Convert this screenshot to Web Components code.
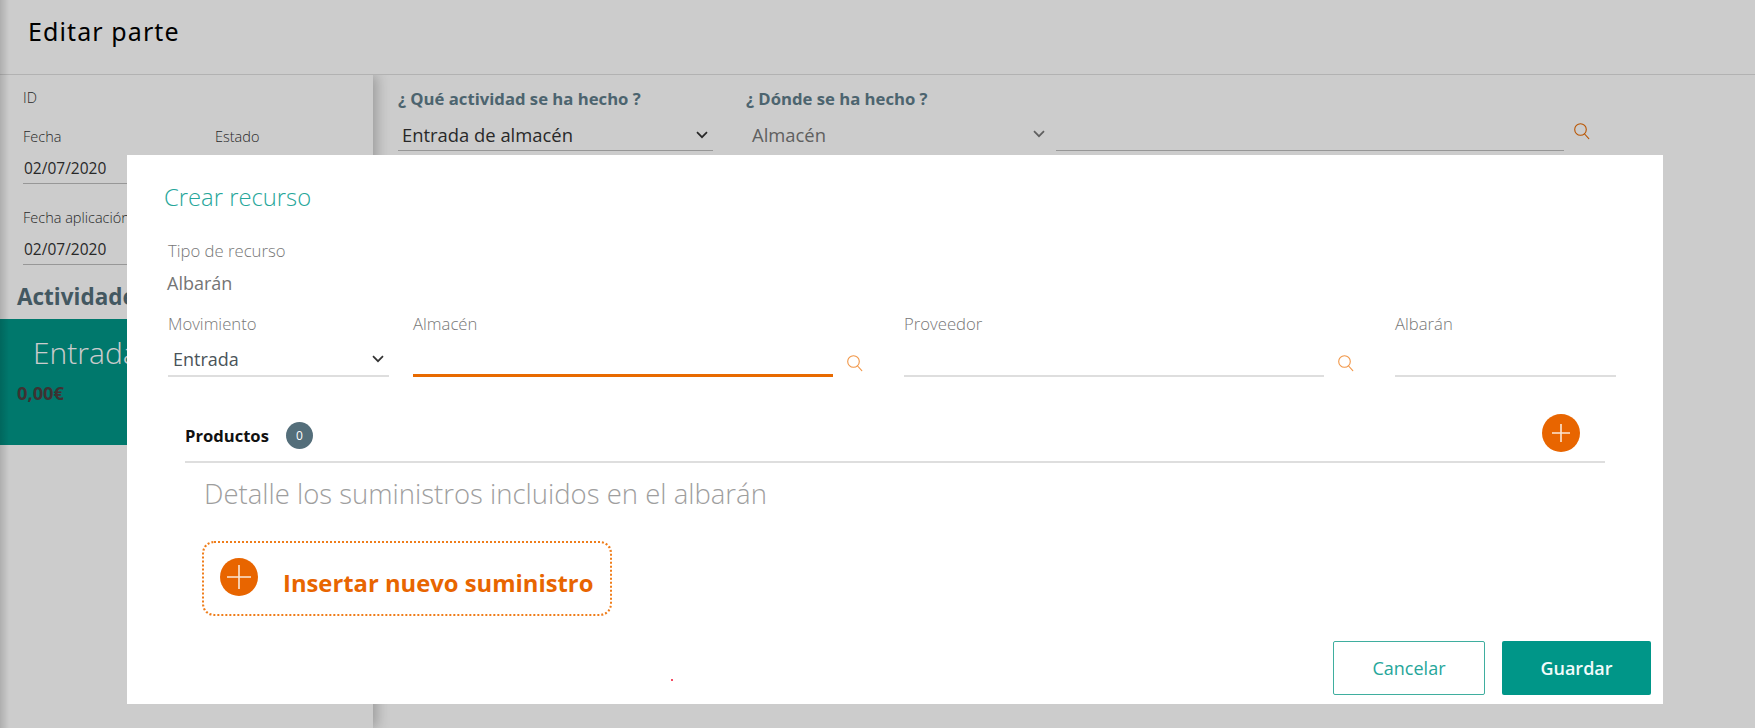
<!DOCTYPE html>
<html lang="es">
<head>
<meta charset="utf-8">
<title>Editar parte</title>
<style>
  html, body { margin: 0; height: 100%; }
  body { font-family: "Open Sans", sans-serif; background: #fff; overflow: hidden; }
</style>
</head>
<body>
<parte-page>
  <parte-sidebar></parte-sidebar>
  <parte-where></parte-where>
</parte-page>
<parte-overlay>
  <recurso-modal></recurso-modal>
</parte-overlay>

<script>
const searchIcon = (color) => /*html*/`
  <svg width="18" height="18" viewBox="0 0 18 18" fill="none" stroke="${color}" stroke-width="1.1" stroke-linecap="round">
    <circle cx="7.5" cy="7.5" r="5.8"/>
    <path d="M11.6 12 L15.8 16.6"/>
  </svg>`

const chevron = (color) => /*html*/`
  <svg width="12" height="8" viewBox="0 0 12 8" fill="none" stroke="${color}" stroke-width="1.7">
    <path d="M1 1.2 L6 6.2 L11 1.2"/>
  </svg>`

class ParteHeader extends HTMLElement {
  constructor () {
    super()
    this.attachShadow({ mode: 'open' })
  }
  connectedCallback () {
    this.shadowRoot.innerHTML = /*html*/`
      <style>
        :host { display: flex; align-items: center; height: 62px; padding: 0 0 12px 28px; border-bottom: 1px solid #dfdfdf; background: #fff; position: relative; z-index: 2; }
        h1 { margin: 0; font: 400 25px "Noto Sans", sans-serif; color: #000; letter-spacing: 1.1px; }
      </style>
      <h1><slot></slot></h1>
    `
  }
}
customElements.define('parte-header', ParteHeader)

class ParteField extends HTMLElement {
  constructor () {
    super()
    this.attachShadow({ mode: 'open' })
  }
  connectedCallback () {
    this.shadowRoot.innerHTML = /*html*/`
      <style>
        :host { display: block; }
        label { display: block; font: 300 14.5px/20px "Open Sans", sans-serif; color: #333; }
        .value { font: 400 15.5px/20px "Open Sans", sans-serif; color: #333; margin-top: 11px; padding: 0 0 5px 1px; border-bottom: 1px solid #bdbdbd; height: 20px; }
      </style>
      <label>${this.getAttribute('label')}</label>
      ${this.hasAttribute('value') ? `<div class="value">${this.getAttribute('value')}</div>` : ''}
    `
  }
}
customElements.define('parte-field', ParteField)

class ParteSidebar extends HTMLElement {
  constructor () {
    super()
    this.attachShadow({ mode: 'open' })
  }
  connectedCallback () {
    this.shadowRoot.innerHTML = /*html*/`
      <style>
        :host { display: block; width: 373px; flex: none; box-shadow: 4px 0 12px rgba(0,0,0,.24); position: relative; z-index: 1; background: #fff; }
        .fields { display: flex; flex-direction: column; padding: 13px 23px 0; gap: 19px; }
        .row { display: grid; grid-template-columns: 192px 1fr; margin-bottom: 5px; }
        h2 { margin: 17px 0 7px 17px; font: 700 22.5px/30px "Open Sans", sans-serif; color: #546e7a; }
        .card { height: 126px; background: #009688; }
        .name { padding: 14px 0 0 33px; font: 300 30px/40px "Open Sans", sans-serif; color: #fff; }
        .amount { padding: 9px 0 0 17px; font: 700 18.3px/22px "Open Sans", sans-serif; color: #4e3f3f; }
      </style>
      <div class="fields">
        <parte-field label="ID"></parte-field>
        <div class="row">
          <parte-field label="Fecha" value="02/07/2020"></parte-field>
          <parte-field label="Estado"></parte-field>
        </div>
        <parte-field label="Fecha aplicación" value="02/07/2020"></parte-field>
      </div>
      <h2>Actividades</h2>
      <div class="card">
        <div class="name">Entrada</div>
        <div class="amount">0,00€</div>
      </div>
    `
  }
}
customElements.define('parte-sidebar', ParteSidebar)

class ParteWhere extends HTMLElement {
  constructor () {
    super()
    this.attachShadow({ mode: 'open' })
  }
  connectedCallback () {
    this.shadowRoot.innerHTML = /*html*/`
      <style>
        :host { display: flex; gap: 33px; padding: 13px 0 0 25px; align-items: flex-start; }
        .col { display: flex; flex-direction: column; }
        h3 { margin: 0 0 5px; font: 700 16.7px/22px "Open Sans", sans-serif; color: #607d8b; }
        .control { display: flex; align-items: center; justify-content: space-between; height: 36px; border-bottom: 1px solid #bdbdbd; box-sizing: border-box; padding: 4px 5px 0 4px; font: 400 18.4px "Open Sans", sans-serif; color: #333; }
        .first .control { width: 315px; }
        .second .control { width: 300px; padding: 2px 1px 0 6px; color: #777; border-bottom: 0; }
        .where { display: flex; align-items: flex-start; }
        .search { width: 508px; height: 36px; border-bottom: 1px solid #bdbdbd; box-sizing: border-box; margin-left: 10px; }
        .icon { margin: 7px 0 0 9px; line-height: 0; }
      </style>
      <div class="col first">
        <h3>¿ Qué actividad se ha hecho ?</h3>
        <div class="control">Entrada de almacén ${chevron('#333')}</div>
      </div>
      <div class="col second">
        <h3>¿ Dónde se ha hecho ?</h3>
        <div class="where">
          <div class="control">Almacén ${chevron('#777')}</div>
          <div class="search"></div>
          <div class="icon">${searchIcon('#e86a00')}</div>
        </div>
      </div>
    `
  }
}
customElements.define('parte-where', ParteWhere)

class PartePage extends HTMLElement {
  constructor () {
    super()
    this.attachShadow({ mode: 'open' })
  }
  connectedCallback () {
    this.shadowRoot.innerHTML = /*html*/`
      <style>
        :host { display: flex; flex-direction: column; height: 728px; position: relative; }
        :host::after { content: ""; position: absolute; inset: 0 auto 0 0; width: 9px; z-index: 3; background: linear-gradient(90deg, rgba(0,0,0,.14), rgba(0,0,0,0)); }
        .body { flex: 1; display: flex; min-height: 0; }
      </style>
      <parte-header>Editar parte</parte-header>
      <div class="body">
        <slot name="side"></slot>
        <slot></slot>
      </div>
    `
    this.querySelector('parte-sidebar').slot = 'side'
  }
}
customElements.define('parte-page', PartePage)

class ParteOverlay extends HTMLElement {
  constructor () {
    super()
    this.attachShadow({ mode: 'open' })
  }
  connectedCallback () {
    this.shadowRoot.innerHTML = /*html*/`
      <style>
        :host { display: block; position: fixed; inset: 0; z-index: 10; background: rgba(0,0,0,.2); }
      </style>
      <slot></slot>
    `
  }
}
customElements.define('parte-overlay', ParteOverlay)

class RecursoField extends HTMLElement {
  constructor () {
    super()
    this.attachShadow({ mode: 'open' })
  }
  connectedCallback () {
    const search = this.hasAttribute('search')
    this.shadowRoot.innerHTML = /*html*/`
      <style>
        :host { display: block; }
        label { display: block; font: 300 16.7px/22px "Open Sans", sans-serif; color: #777; }
        .wrap { display: flex; align-items: flex-start; margin-top: 8px; }
        .line { flex: none; width: ${search ? '420px' : '100%'}; height: 34px; box-sizing: border-box; border-bottom: 2px solid #dedede; display: flex; align-items: center; justify-content: space-between; padding: 0 5px; font: 400 18px "Open Sans", sans-serif; color: #4a5459; }
        :host([active]) .line { border-bottom: 3px solid #e86a00; }
        .icon { margin: 11px 0 0 13px; line-height: 0; opacity: .8; }
      </style>
      <label>${this.getAttribute('label')}</label>
      <div class="wrap">
        <div class="line"><slot></slot></div>
        ${search ? `<div class="icon">${searchIcon('#ef7d1a')}</div>` : ''}
      </div>
    `
  }
}
customElements.define('recurso-field', RecursoField)

class RoundPlus extends HTMLElement {
  constructor () {
    super()
    this.attachShadow({ mode: 'open' })
  }
  connectedCallback () {
    this.shadowRoot.innerHTML = /*html*/`
      <style>
        :host { display: block; width: 38px; height: 38px; flex: none; }
        svg { display: block; }
      </style>
      <svg width="38" height="38" viewBox="0 0 38 38">
        <circle cx="19" cy="19" r="19" fill="#e86500"/>
        <path d="M${this.hasAttribute('big') ? '7 19H31M19 7V31' : '10 19H28M19 10V28'}" stroke="#fbe6d4" stroke-width="1.6"/>
      </svg>
    `
  }
}
customElements.define('round-plus', RoundPlus)

class RecursoModal extends HTMLElement {
  constructor () {
    super()
    this.attachShadow({ mode: 'open' })
  }
  connectedCallback () {
    this.shadowRoot.innerHTML = /*html*/`
      <style>
        :host { display: flex; flex-direction: column; position: absolute; left: 127px; top: 155px; width: 1536px; height: 549px; background: #fff; box-sizing: border-box; padding: 25px 12px 9px 0; }
        h2 { margin: 0 0 0 37px; font: 300 23.8px/34px "Open Sans", sans-serif; color: #26a69a; }
        .tipo { margin: 26px 0 0 41px; }
        .tipo label { display: block; font: 300 16.7px/22px "Open Sans", sans-serif; color: #777; }
        .tipo div { font: 400 18px/24px "Open Sans", sans-serif; color: #757575; margin-top: 9px; margin-left: -1px; }
        .fields { display: grid; grid-template-columns: 221px 467px 467px 221px; column-gap: 24px; margin: 18px 0 0 41px; }
        .products { margin: 32px 0 0 58px; width: 1420px; height: 54px; box-sizing: border-box; border-bottom: 2px solid #dedede; display: flex; align-items: center; padding: 0 25px 0 0; }
        .products b { font: 700 16.6px "Open Sans", sans-serif; color: #111; }
        .badge { width: 27px; height: 27px; margin-left: 17px; border-radius: 50%; background: #546e7a; color: #fff; font: 400 12px/27px "Open Sans", sans-serif; text-align: center; }
        .products round-plus { margin: -5px 0 0 auto; }
        p { margin: 12px 0 0 77px; font: 300 27.5px/38px "Open Sans", sans-serif; color: #9e9e9e; }
        .insert { display: flex; align-items: center; margin: 28px 0 0 75px; width: 410px; height: 75px; box-sizing: border-box; border: 2px dotted #ef7d1a; border-radius: 12px; padding: 0 0 0 16px; }
        .insert round-plus { margin-top: -3px; }
        .insert span { margin: 8px 0 0 25px; font: 700 23.8px "Open Sans", sans-serif; color: #e86500; white-space: nowrap; }
        .dot { position: absolute; left: 544px; top: 524px; width: 2px; height: 2px; background: #f01030; border-radius: 50%; }
        .actions { margin-top: auto; display: flex; justify-content: flex-end; gap: 17px; }
        button { width: 149px; height: 54px; border-radius: 2px; font: 600 18px "Open Sans", sans-serif; cursor: pointer; }
        .cancel { width: 152px; background: #fff; color: #26a69a; border: 1px solid #3fae9f; font-weight: 400; }
        .save { background: #009688; color: #f2fbfa; border: 0; }
      </style>
      <h2>Crear recurso</h2>
      <div class="tipo">
        <label>Tipo de recurso</label>
        <div>Albarán</div>
      </div>
      <div class="fields">
        <recurso-field label="Movimiento">Entrada ${chevron('#333')}</recurso-field>
        <recurso-field label="Almacén" search active></recurso-field>
        <recurso-field label="Proveedor" search></recurso-field>
        <recurso-field label="Albarán"></recurso-field>
      </div>
      <div class="products">
        <b>Productos</b>
        <span class="badge">0</span>
        <round-plus></round-plus>
      </div>
      <p>Detalle los suministros incluidos en el albarán</p>
      <div class="insert">
        <round-plus big></round-plus>
        <span>Insertar nuevo suministro</span>
      </div>
      <div class="dot"></div>
      <div class="actions">
        <button class="cancel">Cancelar</button>
        <button class="save">Guardar</button>
      </div>
    `
  }
}
customElements.define('recurso-modal', RecursoModal)
</script>
</body>
</html>
